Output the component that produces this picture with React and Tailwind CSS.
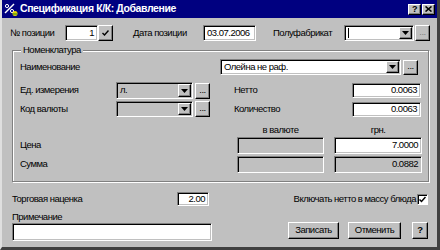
import React from 'react';

// sunken edit box (Win9x style)
const Field = ({ className = '', white = true, align = 'right', children }) => (
  <div
    className={`flex items-center border border-t-[#808080] border-l-[#808080] border-b-white border-r-white shadow-[inset_1px_1px_0_#000,inset_-1px_-1px_0_#c0c0c0] px-[3px] ${
      white ? 'bg-white' : 'bg-[#c0c0c0]'
    } ${align === 'right' ? 'justify-end' : 'justify-start'} ${className}`}
  >
    {children}
  </div>
);

const Raised = ({ className = '', children }) => (
  <div
    className={`flex items-center justify-center bg-[#c0c0c0] border border-t-white border-l-white border-b-black border-r-black shadow-[inset_-1px_-1px_0_#808080] ${className}`}
  >
    {children}
  </div>
);

const Arrow = () => (
  <Raised className="w-[13px] h-full shrink-0">
    <svg width="7" height="4" viewBox="0 0 7 4">
      <path d="M0 0h7L3.5 4z" fill="#000" />
    </svg>
  </Raised>
);

const Combo = ({ className = '', white = true, children }) => (
  <div
    className={`flex items-stretch border border-t-[#808080] border-l-[#808080] border-b-white border-r-white shadow-[inset_1px_1px_0_#000,inset_-1px_-1px_0_#c0c0c0] p-[1px] ${
      white ? 'bg-white' : 'bg-[#c0c0c0]'
    } ${className}`}
  >
    <div className="flex-1 flex items-center pl-[2px] overflow-hidden whitespace-nowrap">{children}</div>
    <Arrow />
  </div>
);

const Dots = ({ className = '', dim = false }) => (
  <Raised className={`w-[15px] ${className}`}>
    <span className={`leading-none -mt-[2px] ${dim ? 'text-[#808080]' : 'text-black'}`}>...</span>
  </Raised>
);

function App() {
  return (
    <div className="w-[440px] h-[250px] bg-[#c0c0c0] font-['Liberation_Sans',Arial,sans-serif] text-[9.5px] tracking-[-0.5px] text-black overflow-hidden">
      <div className="w-[440px] h-[250px] border-l-2 border-l-[#dfdfdf] border-r-[3px] border-r-[#404040] border-b-[3px] border-b-[#404040] flex flex-col">
        {/* title bar */}
        <div className="h-[18px] bg-[#000080] flex items-center pl-[1px] pr-[1px] shrink-0">
          <svg width="16" height="16" viewBox="0 0 16 16" className="shrink-0">
            <path d="M2 12L11 3" stroke="#fff" strokeWidth="1.5" />
            <circle cx="4" cy="5" r="1.6" fill="none" stroke="#fff" strokeWidth="1" />
            <circle cx="9" cy="10" r="1.6" fill="none" stroke="#fff" strokeWidth="1" />
            <circle cx="12" cy="12.5" r="2.5" fill="#e8d800" />
            <path d="M10 13h4" stroke="#208020" strokeWidth="1" />
          </svg>
          <span className="ml-[1px] text-white font-bold text-[10.5px] tracking-[-0.4px]">Спецификация К/К: Добавление</span>
          <div className="ml-auto flex gap-[1px] mr-[1px]">
            <Raised className="w-[13px] h-[11px]">
              <span className="font-bold text-[9px] leading-none">?</span>
            </Raised>
            <Raised className="w-[13px] h-[11px]">
              <svg width="7" height="6" viewBox="0 0 7 6">
                <path d="M0.5 0.5L6.5 5.5M6.5 0.5L0.5 5.5" stroke="#000" strokeWidth="1.6" />
              </svg>
            </Raised>
          </div>
        </div>

        {/* row 1 */}
        <div className="flex items-center h-[16px] mt-[7px] pl-[8px]">
          <span className="w-[55px]">№ позиции</span>
          <Field className="w-[33px] h-[16px]">1</Field>
          <Raised className="w-[15px] h-[16px]">
            <svg width="7" height="6" viewBox="0 0 7 6">
              <path d="M0.5 3L2.5 5L6.5 0.5" stroke="#000" strokeWidth="1.4" fill="none" />
            </svg>
          </Raised>
          <span className="ml-[20px] w-[70px]">Дата позиции</span>
          <Field className="w-[53px] h-[16px]" align="left">03.07.2006</Field>
          <span className="ml-[17px] w-[71px]">Полуфабрикат</span>
          <Combo className="w-[70px] h-[16px]">
            <span className="w-[1px] h-[10px] bg-black" />
          </Combo>
          <Dots className="h-[16px] ml-[1px]" dim />
        </div>

        {/* group box */}
        <div className="relative ml-[10px] mt-[9px] w-[417px] h-[132px] border border-[#808080] shadow-[1px_1px_0_#fff,inset_1px_1px_0_#fff] pl-[7px]">
          <span className="absolute -top-[7px] left-[8px] px-[2px] bg-[#c0c0c0] leading-[12px]">Номенклатура</span>

          <div className="flex items-center h-[16px] mt-[8px]">
            <span className="w-[200px]">Наименование</span>
            <Combo className="w-[181px] h-[16px]">Олейна не раф.</Combo>
            <Dots className="h-[15px] ml-[2px]" />
          </div>

          <div className="flex items-center h-[17px] mt-[7px]">
            <span className="w-[96px]">Ед. измерения</span>
            <Combo className="w-[77px] h-[17px]" white={false}>л.</Combo>
            <Dots className="h-[16px] ml-[2px] w-[14px]" />
            <span className="ml-[24px] w-[118px]">Нетто</span>
            <Field className="w-[69px] h-[15px]">0.0063</Field>
          </div>

          <div className="flex items-center h-[16px] mt-[2px]">
            <span className="w-[96px]">Код валюты</span>
            <Combo className="w-[77px] h-[16px]" white={false} />
            <Dots className="h-[16px] ml-[2px] w-[14px]" />
            <span className="ml-[24px] w-[118px]">Количество</span>
            <Field className="w-[69px] h-[15px]">0.0063</Field>
          </div>

          <div className="flex items-center h-[12px] mt-[7px] pl-[217px]">
            <span className="w-[87px] text-center">в валюте</span>
            <span className="ml-[10px] w-[88px] text-center">грн.</span>
          </div>

          <div className="flex items-center h-[17px] mt-[1px]">
            <span className="w-[217px]">Цена</span>
            <Field className="w-[87px] h-[17px]" white={false} />
            <Field className="w-[88px] h-[17px] ml-[10px]">7.0000</Field>
          </div>

          <div className="flex items-center h-[17px] mt-[2px]">
            <span className="w-[217px]">Сумма</span>
            <Field className="w-[87px] h-[17px]" white={false} />
            <Field className="w-[88px] h-[17px] ml-[10px]" white={false}>0.0882</Field>
          </div>
        </div>

        {/* trade margin row */}
        <div className="flex items-center h-[14px] mt-[10px] pl-[10px]">
          <span className="w-[165px]">Торговая наценка</span>
          <Field className="w-[32px] h-[14px]">2.00</Field>
          <span className="ml-auto">Включать нетто в массу блюда</span>
          <div className="ml-[1px] mr-[9px] w-[11px] h-[11px] bg-white border border-t-[#808080] border-l-[#808080] border-b-white border-r-white shadow-[inset_1px_1px_0_#000] flex items-center justify-center">
            <svg width="7" height="7" viewBox="0 0 7 7">
              <path d="M0.5 3.5L2.5 5.5L6.5 1" stroke="#000" strokeWidth="1.5" fill="none" />
            </svg>
          </div>
        </div>

        <div className="pl-[10px] mt-[5px] h-[11px] leading-[11px]">Примечание</div>

        <div className="flex items-start pl-[10px] mt-[0px]">
          <Field className="w-[200px] h-[18px] mt-[1px]" />
          <Raised className="ml-[76px] w-[51px] h-[17px]">Записать</Raised>
          <Raised className="ml-[9px] w-[53px] h-[17px]">Отменить</Raised>
          <Raised className="ml-[11px] w-[16px] h-[17px] font-bold">?</Raised>
        </div>
      </div>
    </div>
  );
}

export default App;
